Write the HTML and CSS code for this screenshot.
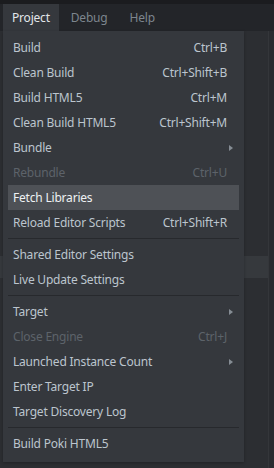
FILE: index.html
```html
<!DOCTYPE html>
<html lang="en">
<head>
    <meta charset="UTF-8">
    <title>Project menu</title>
    <link rel="stylesheet" href="styles.css">
</head>
<body>
    <div class="editor">
        <div class="menubar">
            <div class="menubar-item active">Project</div>
            <div class="menubar-item">Debug</div>
            <div class="menubar-item">Help</div>
        </div>
        <div class="workspace">
            <div class="outline">
                <div class="outline-row"></div>
                <div class="outline-row"></div>
                <div class="outline-row"></div>
                <div class="outline-row"></div>
                <div class="outline-row"></div>
                <div class="outline-row"></div>
                <div class="outline-row"></div>
                <div class="outline-row"></div>
                <div class="outline-row"></div>
                <div class="outline-row selected"></div>
            </div>
            <div class="scroll-edge"></div>
        </div>

        <div class="dropdown">
            <div class="menu-item"><span>Build</span><span class="shortcut">Ctrl+B</span></div>
            <div class="menu-item"><span>Clean Build</span><span class="shortcut">Ctrl+Shift+B</span></div>
            <div class="menu-item"><span>Build HTML5</span><span class="shortcut">Ctrl+M</span></div>
            <div class="menu-item"><span>Clean Build HTML5</span><span class="shortcut">Ctrl+Shift+M</span></div>
            <div class="menu-item"><span>Bundle</span><span class="arrow"></span></div>
            <div class="menu-item disabled"><span>Rebundle</span><span class="shortcut">Ctrl+U</span></div>
            <div class="menu-item hover"><span>Fetch Libraries</span></div>
            <div class="menu-item"><span>Reload Editor Scripts</span><span class="shortcut">Ctrl+Shift+R</span></div>
            <div class="separator"></div>
            <div class="menu-item"><span>Shared Editor Settings</span></div>
            <div class="menu-item"><span>Live Update Settings</span></div>
            <div class="separator"></div>
            <div class="menu-item"><span>Target</span><span class="arrow"></span></div>
            <div class="menu-item disabled"><span>Close Engine</span><span class="shortcut">Ctrl+J</span></div>
            <div class="menu-item"><span>Launched Instance Count</span><span class="arrow"></span></div>
            <div class="menu-item"><span>Enter Target IP</span></div>
            <div class="menu-item"><span>Target Discovery Log</span></div>
            <div class="separator"></div>
            <div class="menu-item"><span>Build Poki HTML5</span></div>
        </div>
    </div>
</body>
</html>
```

FILE: styles.css
```css
body {
    margin: 0;
    padding: 0;
    background: #2c2e32;
    font-family: 'Noto Sans', sans-serif;
    font-size: 12px;
    letter-spacing: -0.2px;
    color: #bcc5ce;
}

.editor {
    position: relative;
    width: 274px;
    height: 468px;
    overflow: hidden;
    display: flex;
    flex-direction: column;
    border-top: 4px solid #1b1c1f;
    box-sizing: border-box;
}

.menubar {
    display: flex;
    height: 27px;
    background: #232529;
    padding-left: 3px;
}

.menubar-item {
    display: flex;
    align-items: center;
    padding: 0 10px 0 12px;
    color: #7d858e;
}

.menubar-item.active {
    padding: 0 9px;
    background: #35383d;
    color: #e2e6ea;
}

.workspace {
    flex: 1;
    display: flex;
    background: #2c2e32;
}

.outline {
    flex: 1;
    display: flex;
    flex-direction: column;
}

.outline-row {
    height: 25px;
    flex-shrink: 0;
}

.outline-row.selected {
    height: 22px;
    background: #36393d;
}

.scroll-edge {
    width: 5px;
    border-left: 1px solid #34363a;
    background: #2a2c30;
}

.dropdown {
    position: absolute;
    left: 3px;
    top: 27px;
    width: 241px;
    padding: 4px 5px 6px;
    box-sizing: border-box;
    background: #35383d;
    box-shadow: 0 1px 3px rgba(0, 0, 0, 0.25);
}

.menu-item {
    display: flex;
    align-items: center;
    justify-content: space-between;
    height: 25px;
    padding: 0 12px 0 5px;
}

.menu-item.hover {
    background: #4e5156;
    color: #eef1f4;
}

.menu-item.disabled {
    color: #5d636a;
}

.arrow {
    width: 0;
    height: 0;
    margin-right: -6px;
    border-top: 3px solid transparent;
    border-bottom: 3px solid transparent;
    border-left: 4px solid #858c94;
}

.separator {
    height: 1px;
    margin: 3px 0;
    background: #27292d;
}
```
